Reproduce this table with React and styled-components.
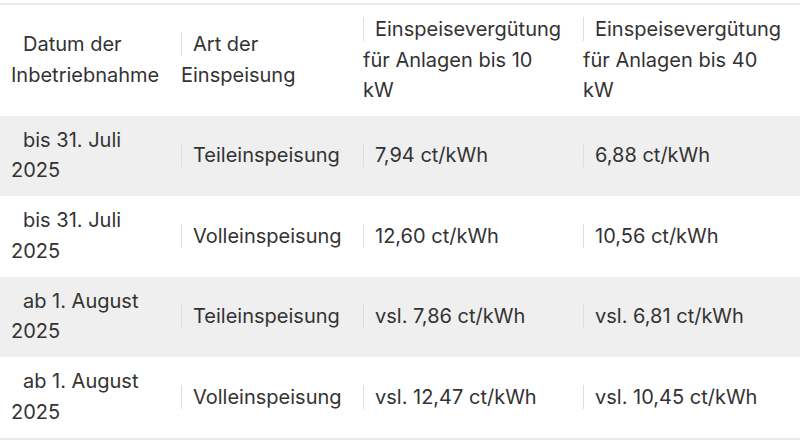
import React from 'react';
import styled, { createGlobalStyle } from 'styled-components';

const rows = [
	['bis 31. Juli 2025', 'Teileinspeisung', '7,94 ct/kWh', '6,88 ct/kWh'],
	['bis 31. Juli 2025', 'Volleinspeisung', '12,60 ct/kWh', '10,56 ct/kWh'],
	['ab 1. August 2025', 'Teileinspeisung', 'vsl. 7,86 ct/kWh', 'vsl. 6,81 ct/kWh'],
	['ab 1. August 2025', 'Volleinspeisung', 'vsl. 12,47 ct/kWh', 'vsl. 10,45 ct/kWh'],
];

const headers = [
	'Datum der Inbetriebnahme',
	'Art der Einspeisung',
	'Einspeisevergütung für Anlagen bis 10 kW',
	'Einspeisevergütung für Anlagen bis 40 kW',
];

const GlobalStyle = createGlobalStyle`
	body {
		margin: 0;
		background: #ffffff;
		font-family: Inter, "Noto Sans", sans-serif;
		color: #333333;
	}
`;

export default function App() {
	return (
		<>
			<GlobalStyle />
			<Table>
				<HeadRow>
					{headers.map((h, i) => (
						<Cell key={h}>
							<Divider $hidden={i === 0} />
							{h}
						</Cell>
					))}
				</HeadRow>
				{rows.map((row, r) => (
					<Row key={r} $striped={r % 2 === 0}>
						{row.map((cell, i) => (
							<Cell key={i}>
								<Divider $hidden={i === 0} />
								{cell}
							</Cell>
						))}
					</Row>
				))}
			</Table>
		</>
	);
}

const Table = styled.div`
	margin-top: 3px;
	width: 800px;
	border-top: 2px solid #ebebeb;
	border-bottom: 2px solid #ebebeb;
	font-size: 20px;
	line-height: 30.5px;
`;

const Row = styled.div`
	display: grid;
	grid-template-columns: 170px 182px 220px 228px;
	align-items: center;
	min-height: 80.5px;
	background: ${p => (p.$striped ? '#efefef' : '#ffffff')};
`;

const HeadRow = styled(Row)`
	min-height: 110px;
`;

const Cell = styled.div`
	padding: 9px 10px 10px 11px;
`;

const Divider = styled.span`
	display: inline-block;
	width: 1px;
	height: 24px;
	margin-right: 11px;
	vertical-align: -5px;
	background: ${p => (p.$hidden ? 'transparent' : '#dedede')};
`;
